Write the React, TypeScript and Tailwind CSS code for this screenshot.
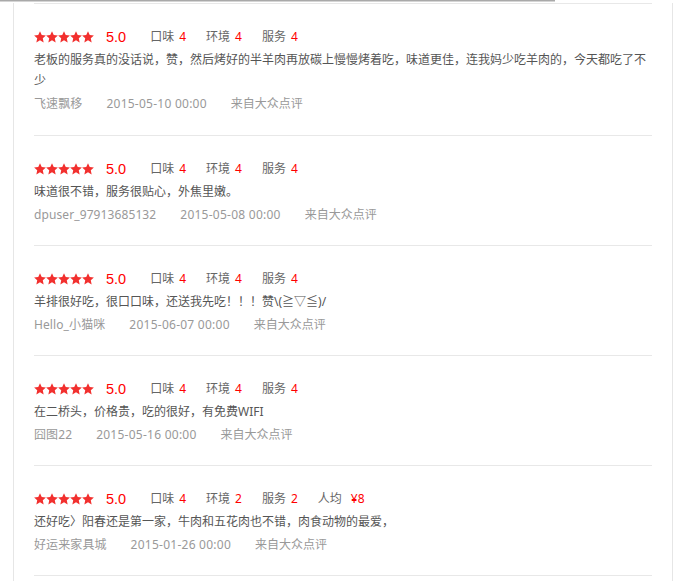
import React from 'react';

interface Review {
  id: number;
  score: string;
  taste: number;
  env: number;
  service: number;
  avgPrice?: string;
  text: string;
  user: string;
  date: string;
}

const reviews: Review[] = [
  {
    id: 1,
    score: '5.0',
    taste: 4,
    env: 4,
    service: 4,
    text: '老板的服务真的没话说，赞，然后烤好的半羊肉再放碳上慢慢烤着吃，味道更佳，连我妈少吃羊肉的，今天都吃了不少',
    user: '飞速飘移',
    date: '2015-05-10 00:00',
  },
  {
    id: 2,
    score: '5.0',
    taste: 4,
    env: 4,
    service: 4,
    text: '味道很不错，服务很贴心，外焦里嫩。',
    user: 'dpuser_97913685132',
    date: '2015-05-08 00:00',
  },
  {
    id: 3,
    score: '5.0',
    taste: 4,
    env: 4,
    service: 4,
    text: '羊排很好吃，很口口味，还送我先吃！！！赞\\(≧▽≦)/',
    user: 'Hello_小猫咪',
    date: '2015-06-07 00:00',
  },
  {
    id: 4,
    score: '5.0',
    taste: 4,
    env: 4,
    service: 4,
    text: '在二桥头，价格贵，吃的很好，有免费WIFI',
    user: '囧图22',
    date: '2015-05-16 00:00',
  },
  {
    id: 5,
    score: '5.0',
    taste: 4,
    env: 2,
    service: 2,
    avgPrice: '¥8',
    text: '还好吃〉阳春还是第一家，牛肉和五花肉也不错，肉食动物的最爱，',
    user: '好运来家具城',
    date: '2015-01-26 00:00',
  },
];

const Star = () => (
  <svg width="12" height="12" viewBox="1 1.5 22 21" className="shrink-0">
    <path
      d="M12 1.5l3.2 6.9 7.6.9-5.7 5.1 1.6 7.5L12 18l-6.7 3.9 1.6-7.5-5.7-5.1 7.6-.9z"
      fill="#f2302e"
    />
  </svg>
);

function Score({ label, value }: { label: string; value: React.ReactNode }) {
  return (
    <span className="mr-[20px] flex items-center text-[12px] text-[#666]">
      {label}
      <span className="ml-[5px] text-[#f00]">{value}</span>
    </span>
  );
}

export default function App() {
  return (
    <div
      className="min-h-[581px] bg-white"
      style={{ fontFamily: '"Noto Sans", "Noto Sans CJK SC", sans-serif' }}
    >
      {/* scroll edge */}
      <div className="h-[1px] w-[555px] bg-[#a9a9a9]" />
      <div className="h-[1px] w-[555px] bg-[#d4d4d4]" />

      <div className="ml-[13px] mt-[1px] min-h-[579px] w-[660px] border-x border-[#e6e6e6] px-[20px]">
        {reviews.map((r, i) => (
          <div
            key={r.id}
            className={`border-t border-[#e8e8e8] pt-[21px] ${i === 0 ? 'pb-[21px]' : 'pb-[20px]'}`}
          >
            <div className="flex h-[24px] items-center">
              <div className="flex items-center">
                <Star />
                <Star />
                <Star />
                <Star />
                <Star />
              </div>
              <span
                className="ml-[12px] mr-[24px] text-[14.5px] leading-none text-[#f00]"
                style={{ fontFamily: '"Liberation Sans", sans-serif' }}
              >
                {r.score}
              </span>
              <Score label="口味" value={r.taste} />
              <Score label="环境" value={r.env} />
              <Score label="服务" value={r.service} />
              {r.avgPrice && (
                <span className="flex items-center text-[12px] text-[#666]">
                  人均
                  <span className="ml-[9px] text-[#f00]">{r.avgPrice}</span>
                </span>
              )}
            </div>
            <p className="text-[12px] leading-[21px] text-[#555]">{r.text}</p>
            <div className="mt-[2px] flex text-[12px] leading-[21px] text-[#999]">
              <span className="mr-[24px] tracking-[0.1px]">{r.user}</span>
              <span className="mr-[24px] tracking-[0.25px]">{r.date}</span>
              <span>来自大众点评</span>
            </div>
          </div>
        ))}
        <div className="h-[20px] border-t border-[#e8e8e8]" />
      </div>
    </div>
  );
}
